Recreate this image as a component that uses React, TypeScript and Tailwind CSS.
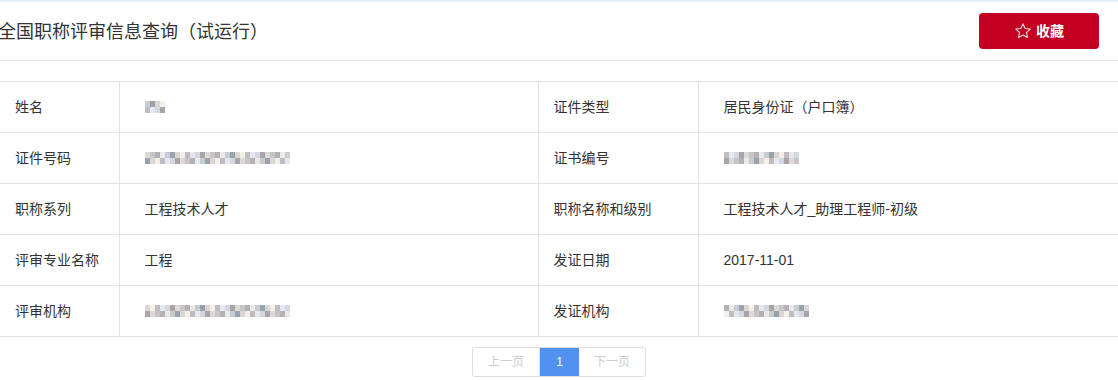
const shades = ['#dcd9d9', '#c9c5c7', '#b3b1b5', '#ebe9e6', '#c6ccd2', '#98a3ab', '#ddd4d4', '#f3f0e8', '#bfbbbf', '#e5e8ee', '#d3d7df', '#a8a4a7']

const Mosaic = ({ cols, seed }: { cols: number; seed: number }) => {
  const cells: string[] = []
  let s = seed
  for (let i = 0; i < cols * 2; i++) {
    s = (s * 9301 + 49297) % 233280
    cells.push(shades[s % shades.length])
  }
  return (
    <div className="flex flex-col">
      {[0, 1].map((r) => (
        <div key={r} className="flex">
          {cells.slice(r * cols, r * cols + cols).map((c, i) => (
            <span key={i} className="block w-[5px] h-[6px]" style={{ backgroundColor: c }} />
          ))}
        </div>
      ))}
    </div>
  )
}

type Cell = string | { mosaic: number; seed: number }

const rows: [string, Cell, string, Cell][] = [
  ['姓名', { mosaic: 4, seed: 3 }, '证件类型', '居民身份证（户口簿）'],
  ['证件号码', { mosaic: 29, seed: 11 }, '证书编号', { mosaic: 15, seed: 7 }],
  ['职称系列', '工程技术人才', '职称名称和级别', '工程技术人才_助理工程师-初级'],
  ['评审专业名称', '工程', '发证日期', '2017-11-01'],
  ['评审机构', { mosaic: 29, seed: 5 }, '发证机构', { mosaic: 17, seed: 13 }],
]

const Value = ({ v }: { v: Cell }) =>
  typeof v === 'string' ? <span>{v}</span> : <Mosaic cols={v.mosaic} seed={v.seed} />

export default function App() {
  return (
    <div
      className="w-[1118px] h-[380px] bg-white border-t-2 border-[#e8eef9] text-[#333]"
      style={{ fontFamily: '"Liberation Sans", "Noto Sans CJK SC", sans-serif' }}
    >
      <div className="flex items-center justify-between h-[59px] border-b border-[#e3e3e3]">
        <h1 className="text-[18px] font-normal leading-none -ml-[2px] mt-[2px]">全国职称评审信息查询（试运行）</h1>
        <button className="flex items-center justify-center gap-[4px] w-[120px] h-[36px] mr-[19px] rounded-[4px] bg-[#c30021] text-white text-[14px] font-bold">
          <svg width="18" height="18" viewBox="0 0 24 24" fill="none" stroke="#f7d6dc" strokeWidth="1.5" strokeLinejoin="round">
            <polygon points="12,2.5 14.9,8.7 21.6,9.4 16.6,14 18,20.7 12,17.3 6,20.7 7.4,14 2.4,9.4 9.1,8.7" />
          </svg>
          收藏
        </button>
      </div>

      <table className="mt-[20px] w-full border-collapse text-[14px]">
        <tbody>
          {rows.map((r, i) => (
            <tr key={i} className="h-[51px] border-y border-[#e3e3e3]">
              <td className="w-[119px] pl-[15px] border-r border-[#e3e3e3]">{r[0]}</td>
              <td className="w-[419px] pl-[25px] border-r border-[#e3e3e3]"><Value v={r[1]} /></td>
              <td className="w-[160px] pl-[15px] border-r border-[#e3e3e3]">{r[2]}</td>
              <td className="pl-[25px]"><Value v={r[3]} /></td>
            </tr>
          ))}
        </tbody>
      </table>

      <div className="flex justify-center mt-[10px] text-[12px]">
        <div className="flex h-[30px] border border-[#ddd] rounded-[3px] overflow-hidden">
          <span className="flex items-center justify-center w-[67px] text-[#ccc] border-r border-[#ddd]">上一页</span>
          <span className="flex items-center justify-center w-[39px] bg-[#5192f1] text-white">1</span>
          <span className="flex items-center justify-center w-[66px] text-[#ccc]">下一页</span>
        </div>
      </div>
    </div>
  )
}
